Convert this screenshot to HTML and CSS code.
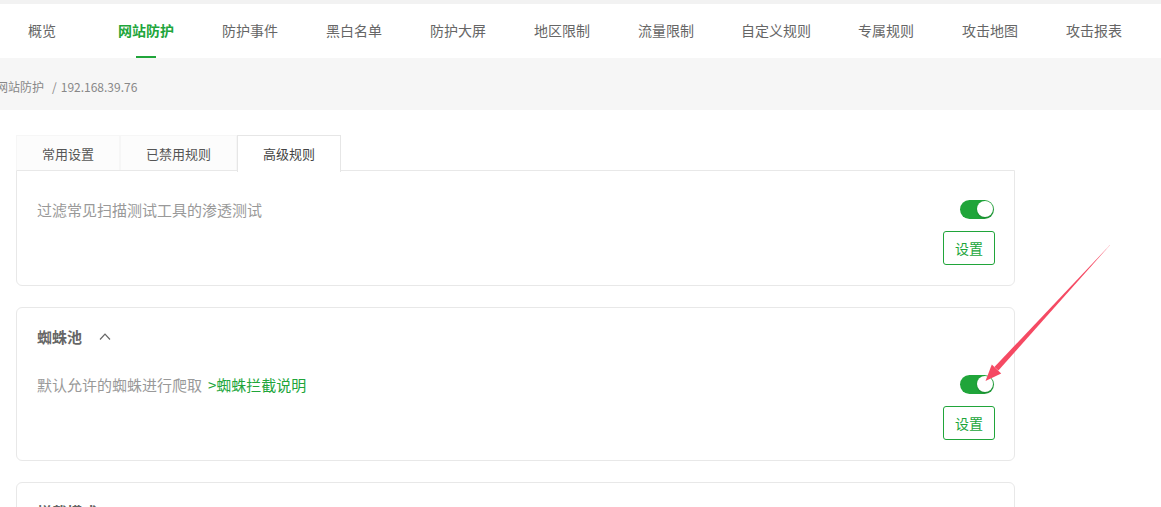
FILE: index.html
```html
<!DOCTYPE html>
<html lang="zh-CN">
<head>
  <meta charset="UTF-8">
  <meta name="viewport" content="width=device-width, initial-scale=1">
  <title>网站防护</title>
  <link rel="stylesheet" href="styles.css">
</head>
<body>

  <nav class="menu">
    <a href="#">概览</a>
    <a href="#" class="active">网站防护</a>
    <a href="#">防护事件</a>
    <a href="#">黑白名单</a>
    <a href="#">防护大屏</a>
    <a href="#">地区限制</a>
    <a href="#">流量限制</a>
    <a href="#" class="narrow">自定义规则</a>
    <a href="#">专属规则</a>
    <a href="#">攻击地图</a>
    <a href="#">攻击报表</a>
  </nav>

  <div class="crumb">
    <span>网站防护</span><span class="sep">/</span>192.168.39.76
  </div>

  <div class="main">
    <div class="tabs">
      <div class="tab">常用设置</div>
      <div class="tab">已禁用规则</div>
      <div class="tab active">高级规则</div>
    </div>

    <div class="card card-first">
      <div class="row">
        <span>过滤常见扫描测试工具的渗透测试</span>
        <span class="switch"></span>
      </div>
      <div class="actions">
        <button class="btn">设置</button>
      </div>
    </div>

    <div class="card">
      <div class="card-title">
        蜘蛛池
        <svg class="chevron" width="12" height="7" viewBox="0 0 12 7">
          <path d="M1 6.5 L6 1.2 L11 6.5" fill="none" stroke="#666" stroke-width="1.2"/>
        </svg>
      </div>
      <div class="row row-spaced">
        <span>默认允许的蜘蛛进行爬取<a href="#" class="link">&gt;蜘蛛拦截说明</a></span>
        <span class="switch"></span>
      </div>
      <div class="actions">
        <button class="btn">设置</button>
      </div>
    </div>

    <div class="card">
      <div class="card-title">拦截模式</div>
    </div>
  </div>

  <!-- 标注箭头 -->
  <svg class="arrow" width="1161" height="507" viewBox="0 0 1161 507">
    <polygon points="1110.3,244.7 998.4,370.6 994.4,367.0 1109.7,245.3" fill="#f54a63"/>
    <polygon points="985.5,381 991.8,364.6 1001.2,373.4" fill="#f54a63"/>
  </svg>

</body>
</html>
```

FILE: styles.css
```css
body {
  margin: 0;
  font-family: "Noto Sans CJK SC", "Noto Sans", sans-serif;
  background-color: #fff;
  color: #555;
  overflow: hidden;
  position: relative;
}

.menu {
  display: flex;
  height: 54px;
  padding-left: 4px;
  border-top: 4px solid #f2f2f2;
  background: #fff;
}

.menu a {
  position: relative;
  padding: 0 24px;
  line-height: 52px;
  font-size: 14px;
  color: #666;
  text-decoration: none;
  white-space: nowrap;
}

.menu a:first-child {
  padding-right: 38px;
}

.menu a.narrow {
  padding: 0 23px;
}

.menu a.active {
  color: #20a53a;
  font-weight: bold;
}

.menu a.active::after {
  content: "";
  position: absolute;
  left: 50%;
  bottom: 0;
  width: 20px;
  height: 2px;
  margin-left: -10px;
  background: #20a53a;
}

.crumb {
  height: 52px;
  box-sizing: border-box;
  padding-top: 21px;
  line-height: 16px;
  font-size: 12px;
  color: #888;
  background: #f6f6f6;
  text-indent: -4px;
  white-space: nowrap;
}

.crumb .sep {
  padding: 0 4px 0 8px;
}

.main {
  width: 999px;
  padding: 25px 0 0 16px;
}

.tabs {
  display: flex;
  height: 35px;
}

.tab {
  padding: 0 25px;
  line-height: 35px;
  font-size: 13px;
  color: #555;
  background: #fcfcfc;
  border: 1px solid #f6f6f6;
  border-bottom: none;
  white-space: nowrap;
}

.tab.active {
  position: relative;
  z-index: 1;
  height: 36px;
  color: #444;
  background: #fff;
  border-color: #e6e6e6;
}

.card {
  border: 1px solid #e8e8e8;
  border-radius: 6px;
  padding: 20px;
  margin-bottom: 21px;
}

.card-first {
  padding-top: 28px;
  border-top-left-radius: 0;
  border-top-right-radius: 0;
}

.card-title {
  display: flex;
  align-items: center;
  height: 16px;
  font-size: 15px;
  font-weight: bold;
  color: #666;
}

.chevron {
  margin-left: 17px;
}

.row {
  display: flex;
  justify-content: space-between;
  align-items: center;
  height: 20px;
  font-size: 15px;
  color: #999;
}

.row-spaced {
  margin-top: 30px;
}

.link {
  margin-left: 6px;
  color: #20a53a;
  text-decoration: none;
}

.switch {
  position: relative;
  width: 34px;
  height: 19px;
  border-radius: 10px;
  background: #20a53a;
}

.switch::after {
  content: "";
  position: absolute;
  top: 1.5px;
  right: 1.5px;
  width: 16px;
  height: 16px;
  border-radius: 50%;
  background: #fff;
  box-shadow: 0 1px 2px rgba(0,0,0,0.2);
}

.actions {
  display: flex;
  justify-content: flex-end;
  margin-top: 12px;
}

.btn {
  width: 52px;
  height: 34px;
  margin-right: -1px;
  padding: 0;
  border: 1px solid #20a53a;
  border-radius: 3px;
  background: #fff;
  color: #20a53a;
  font-family: inherit;
  font-size: 14px;
}

.arrow {
  position: absolute;
  top: 0;
  left: 0;
  pointer-events: none;
}
```
